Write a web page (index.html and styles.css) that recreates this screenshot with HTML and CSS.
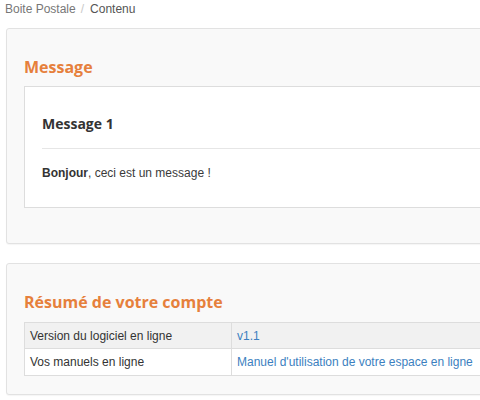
FILE: index.html
```html
<!DOCTYPE html>
<html lang="fr">
<head>
<meta charset="utf-8">
<title>Contenu</title>
<link rel="stylesheet" href="styles.css">
</head>
<body>
<ol class="breadcrumb">
  <li class="crumb">Boite Postale</li>
  <li class="crumb crumb-active">Contenu</li>
</ol>
<div class="page">
  <section class="panel panel-message">
    <h2 class="panel-title">Message</h2>
    <div class="message-box">
      <h3 class="message-title">Message 1</h3>
      <hr class="sep">
      <p class="message-body"><strong>Bonjour</strong>, ceci est un message !</p>
    </div>
  </section>
  <section class="panel panel-account">
    <h2 class="panel-title">Résumé de votre compte</h2>
    <table class="info-table">
      <tr class="row-odd">
        <td class="cell-label">Version du logiciel en ligne</td>
        <td class="cell-value"><a class="link" href="#">v1.1</a></td>
      </tr>
      <tr class="row-even">
        <td class="cell-label">Vos manuels en ligne</td>
        <td class="cell-value"><a class="link" href="#">Manuel d'utilisation de votre espace en ligne</a></td>
      </tr>
    </table>
  </section>
</div>
</body>
</html>
```
FILE: styles.css
```css
html, body {
  margin: 0;
  padding: 0;
  overflow: hidden;
  background: #ffffff;
}
body {
  font-family: "Liberation Sans", Arial, sans-serif;
  font-size: 12px;
  color: #333333;
  width: 480px;
  height: 400px;
}
.breadcrumb {
  list-style: none;
  margin: 0;
  padding: 0 0 0 5px;
  height: 28px;
  display: flex;
  line-height: 18px;
}
.crumb {
  color: #777777;
}
.crumb + .crumb::before {
  content: "/";
  color: #c8c8c8;
  padding: 0 6px 0 4px;
}
.crumb-active {
  color: #555555;
  padding-left: 1px;
}
.page {
  width: 700px;
  margin-left: 6px;
}
.panel {
  background: #f9f9f9;
  border: 1px solid #e2e2e2;
  border-radius: 3px;
  box-shadow: 0 1px 1px rgba(0,0,0,0.04);
  padding: 28px 17px 18px;
}
.panel-message {
  padding-bottom: 35px;
  margin-bottom: 19px;
}
.panel-title {
  font-family: "Open Sans", sans-serif;
  font-weight: 700;
  font-size: 16px;
  line-height: 20px;
  color: #e6803c;
  margin: 0 0 9px;
}
.panel-account .panel-title {
  margin: 0 0 10px;
}
.message-box {
  background: #ffffff;
  border: 1px solid #dddddd;
  padding: 27px 17px 25px;
}
.message-title {
  font-family: "Open Sans", sans-serif;
  font-weight: 700;
  font-size: 14px;
  line-height: 20px;
  color: #333333;
  margin: 0 0 14px;
}
.sep {
  border: 0;
  border-top: 1px solid #e6e6e6;
  margin: 0 0 15px;
}
.message-body {
  margin: 0;
  line-height: 18px;
  color: #3a3a3a;
}
.message-body strong {
  font-weight: 700;
  color: #333333;
}
.info-table {
  border-collapse: collapse;
  width: 100%;
  border: 1px solid #dddddd;
}
.info-table td {
  border: 1px solid #dddddd;
  padding: 0 5px;
  height: 25px;
  line-height: 18px;
  vertical-align: middle;
}
.row-even td {
  height: 26px;
}
.cell-label {
  width: 196px;
  color: #333333;
}
.row-odd td {
  background: #f1f1f1;
}
.row-even td {
  background: #ffffff;
}
.link {
  color: #3c7fc0;
  text-decoration: none;
}
```
